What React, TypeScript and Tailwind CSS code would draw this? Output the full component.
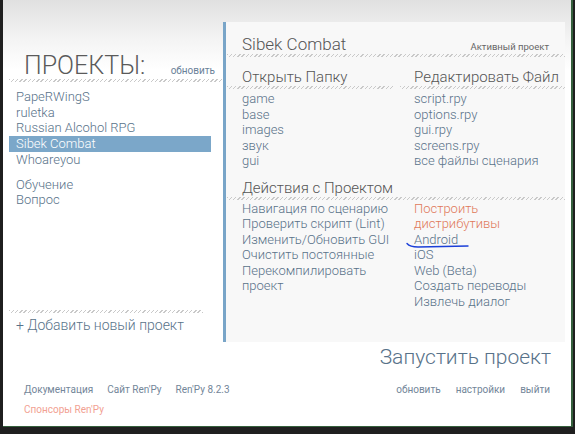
import React from "react";

const HATCH =
  "h-[3px] bg-[repeating-linear-gradient(135deg,#c9c9c9_0px,#c9c9c9_1px,transparent_1px,transparent_3px)]";

const projects = ["PapeRWingS", "ruletka", "Russian Alcohol RPG", "Sibek Combat", "Whoareyou"];
const folders = ["game", "base", "images", "звук", "gui"];
const files = ["script.rpy", "options.rpy", "gui.rpy", "screens.rpy", "все файлы сценария"];

export default function App() {
  return (
    <div className="w-[575px] h-[434px] bg-[#1f1f1f] font-['Roboto',sans-serif] font-light overflow-hidden">
      <div className="ml-[3px] w-[570px] h-[427px] border-r-2 border-b border-[#35603d] bg-[linear-gradient(to_bottom,#e0e0e0,#f4f4f4_40px,#ffffff_70px)] flex flex-col pt-[22px]">
        {/* Main area */}
        <div className="flex h-[320px] ml-[6px]">
          {/* Projects column */}
          <div className="w-[214px] flex flex-col">
            <div className="flex items-baseline justify-between pl-[15px] pr-[8px] mt-[31px]">
              <span className="text-[25px] leading-[25px] text-[#5a5a5a]">ПРОЕКТЫ:</span>
              <span className="text-[10px] text-[#6a8198] font-normal">обновить</span>
            </div>
            <div className={HATCH + " mt-[1px]"} />
            <div className="mt-[7px] text-[13px] leading-[15.5px] text-[#587289]">
              {projects.map((p) =>
                p === "Sibek Combat" ? (
                  <div key={p} className="mr-[12px] pl-[7px] bg-[#7ba7c9] text-white h-[16px] leading-[16px]">
                    {p}
                  </div>
                ) : (
                  <div key={p} className="pl-[7px]">
                    {p}
                  </div>
                )
              )}
              <div className="pl-[7px] mt-[9.5px]">Обучение</div>
              <div className="pl-[7px]">Вопрос</div>
            </div>
            <div className="flex-1" />
            <div className={HATCH + " mr-[20px]"} />
            <div className="pl-[7px] mt-[3px] mb-[8px] text-[14px] leading-[18px] text-[#587289]">
              + Добавить новый проект
            </div>
          </div>

          {/* Accent bar */}
          <div className="w-[3px] bg-[#79a5c8]" />

          {/* Project panel */}
          <div className="w-[339px] bg-[#f8f8f8] relative">
            <div className="flex items-baseline justify-between pl-[16px] pr-[16px] mt-[13px]">
              <span className="text-[17px] leading-[18px] text-[#555555]">Sibek Combat</span>
              <span className="text-[9.5px] text-[#666666] font-normal">Активный проект</span>
            </div>
            <div className={HATCH + " ml-[1px]"} />

            <div className="flex mt-[12px] ml-[1px]">
              <div className="w-[167px]">
                <div className="pl-[15px] text-[15px] leading-[17px] text-[#555555]">Открыть Папку</div>
                <div className={HATCH} />
                <div className="pl-[15px] mt-[2px] text-[13px] leading-[15.5px] text-[#587289]">
                  {folders.map((f) => (
                    <div key={f}>{f}</div>
                  ))}
                </div>
              </div>
              <div className="w-[165px] ml-[6px]">
                <div className="pl-[14px] text-[15px] leading-[17px] text-[#555555]">Редактировать Файл</div>
                <div className={HATCH} />
                <div className="pl-[14px] mt-[2px] text-[13px] leading-[15.5px] text-[#587289]">
                  {files.map((f) => (
                    <div key={f}>{f}</div>
                  ))}
                </div>
              </div>
            </div>

            <div className="mt-[11px] ml-[1px]">
              <div className="pl-[15px] text-[15px] leading-[17px] text-[#555555]">Действия с Проектом</div>
              <div className={HATCH} />
              <div className="flex mt-[1px] text-[13px] leading-[15.5px] text-[#587289]">
                <div className="w-[173px] pl-[15px]">
                  <div>Навигация по сценарию</div>
                  <div>Проверить скрипт (Lint)</div>
                  <div>Изменить/Обновить GUI</div>
                  <div>Очистить постоянные</div>
                  <div>
                    Перекомпилировать
                    <br />
                    проект
                  </div>
                </div>
                <div className="pl-[14px]">
                  <div className="text-[#e0795a]">
                    Построить
                    <br />
                    дистрибутивы
                  </div>
                  <div>Android</div>
                  <div>iOS</div>
                  <div>Web (Beta)</div>
                  <div>Создать переводы</div>
                  <div>Извлечь диалог</div>
                </div>
              </div>
            </div>

            {/* hand-drawn underline under Android */}
            <svg className="absolute left-[178px] top-[218px]" width="68" height="10" viewBox="0 0 68 10" fill="none">
              <path d="M3 3.5 Q6 7 14 7 L64 6" stroke="#1b3fd8" strokeWidth="1.4" strokeLinecap="round" />
            </svg>
          </div>
        </div>

        {/* Launch */}
        <div className="mt-[3px] pr-[20px] text-right text-[21px] leading-[24px] text-[#587289]">
          Запустить проект
        </div>

        {/* Footer links */}
        <div className="flex justify-between mt-[14px] pl-[21px] pr-[21px] text-[10px] leading-[14px] text-[#738699] font-normal">
          <div className="flex gap-[14px]">
            <span>Документация</span>
            <span>Сайт Ren'Py</span>
            <span>Ren'Py 8.2.3</span>
          </div>
          <div className="flex gap-[15px]">
            <span>обновить</span>
            <span>настройки</span>
            <span>выйти</span>
          </div>
        </div>
        <div className="mt-[6px] pl-[21px] text-[10px] leading-[14px] text-[#f2a192] font-normal">Спонсоры Ren'Py</div>
      </div>
    </div>
  );
}
